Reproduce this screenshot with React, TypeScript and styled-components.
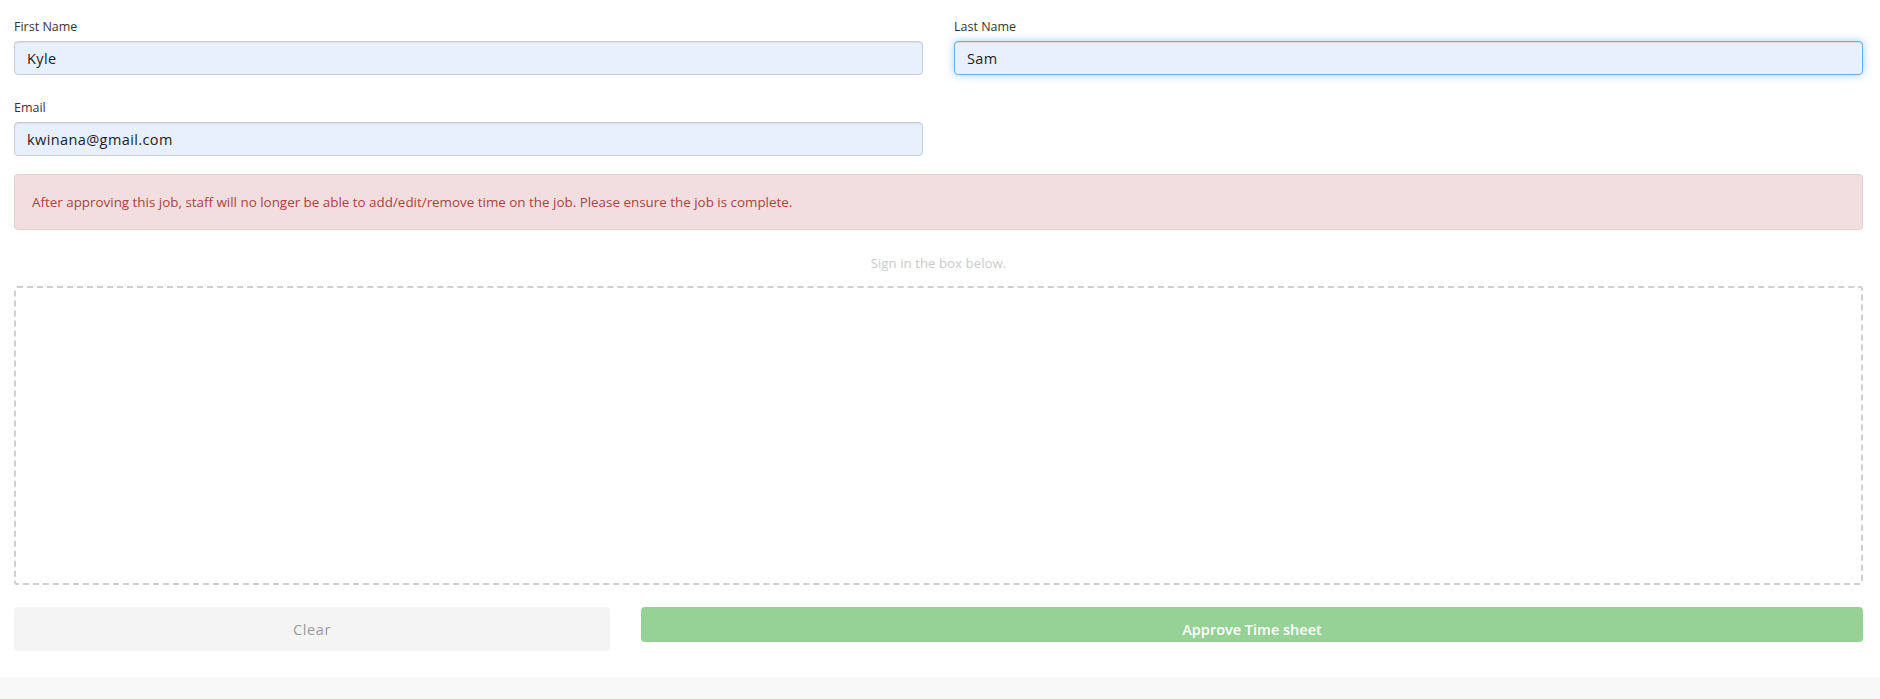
import React, { useEffect, useRef } from 'react'
import styled, { createGlobalStyle, css } from 'styled-components'

const GlobalStyle = createGlobalStyle`
  html, body {
    margin: 0;
    padding: 0;
    background-color: white;
  }

  body {
    font-family: 'Open Sans', 'Liberation Sans', sans-serif;
    color: #333;
  }
`

const Page = styled.div`
  padding: 18px 17px 0 14px;
`

const FieldGrid = styled.div`
  display: grid;
  grid-template-columns: 1fr 1fr;
  column-gap: 31px;
  row-gap: 24px;
`

const FormGroup = styled.div`
  display: flex;
  flex-direction: column;
`

const Label = styled.label`
  display: block;
  font-family: 'Open Sans', sans-serif;
  font-size: 12.5px;
  line-height: 18px;
  color: #3a3430;
  margin-bottom: 5px;
`

const focusRing = css`
  border-color: #66afe9;
  box-shadow: inset 0 1px 1px rgba(0, 0, 0, 0.075), 0 0 8px rgba(102, 175, 233, 0.6);
`

const Input = styled.input<{ $focused?: boolean }>`
  box-sizing: border-box;
  width: 100%;
  height: 34px;
  padding: 6px 12px;
  border: 1px solid #c9ccd1;
  border-radius: 4px;
  background-color: #e8f0fe;
  font-family: 'Open Sans', sans-serif;
  font-size: 14.5px;
  letter-spacing: 0.4px;
  color: #222;
  outline: none;
  box-shadow: inset 0 1px 1px rgba(0, 0, 0, 0.075);

  &:focus {
    ${focusRing}
  }

  ${props => props.$focused && focusRing}
`

const Alert = styled.div`
  margin-top: 18px;
  padding: 16px 17px;
  border: 1px solid #ebccd1;
  border-radius: 4px;
  background-color: #f2dede;
  color: #a94442;
  font-size: 13.4px;
  line-height: 22px;
`

const Hint = styled.p`
  margin: 23px 0 13px;
  text-align: center;
  font-size: 13.3px;
  line-height: 20px;
  color: #cbcbcb;
`

const SignatureBox = styled.div`
  box-sizing: border-box;
  height: 299px;
  border: 2px dashed #cfcfcf;
  border-radius: 3px;
`

const ButtonRow = styled.div`
  display: grid;
  grid-template-columns: 596px 1fr;
  column-gap: 31px;
  align-items: start;
  margin-top: 22px;
`

const Button = styled.button<{ $tall?: boolean }>`
  height: ${props => (props.$tall ? '44px' : '35px')};
  padding: 0 12px;
  border: none;
  border-radius: 4px;
  font-family: 'Open Sans', sans-serif;
  font-size: 14.5px;
  cursor: pointer;
`

const ClearButton = styled(Button)`
  background-color: #f4f4f4;
  color: #9a9a9a;
  letter-spacing: 0.6px;
`

const ApproveButton = styled(Button)`
  padding-top: 9px;
  background-color: #96d196;
  color: white;
  font-weight: 600;
`

const Footer = styled.div`
  margin-top: 26px;
  height: 60px;
  background-color: #f8f8f8;
`

export default function App() {
  const lastNameRef = useRef<HTMLInputElement>(null)

  useEffect(() => {
    const el = lastNameRef.current
    if (el) {
      el.focus()
      el.setSelectionRange(el.value.length, el.value.length)
    }
  }, [])

  return (
    <>
      <GlobalStyle />
      <Page>
        <FieldGrid>
          <FormGroup>
            <Label>First Name</Label>
            <Input defaultValue="Kyle" />
          </FormGroup>
          <FormGroup>
            <Label>Last Name</Label>
            <Input ref={lastNameRef} $focused defaultValue="Sam" />
          </FormGroup>
          <FormGroup>
            <Label>Email</Label>
            <Input defaultValue="kwinana@gmail.com" />
          </FormGroup>
        </FieldGrid>
        <Alert>
          After approving this job, staff will no longer be able to add/edit/remove time on the job. Please
          ensure the job is complete.
        </Alert>
        <Hint>Sign in the box below.</Hint>
        <SignatureBox />
        <ButtonRow>
          <ClearButton $tall>Clear</ClearButton>
          <ApproveButton>Approve Time sheet</ApproveButton>
        </ButtonRow>
      </Page>
      <Footer />
    </>
  )
}
